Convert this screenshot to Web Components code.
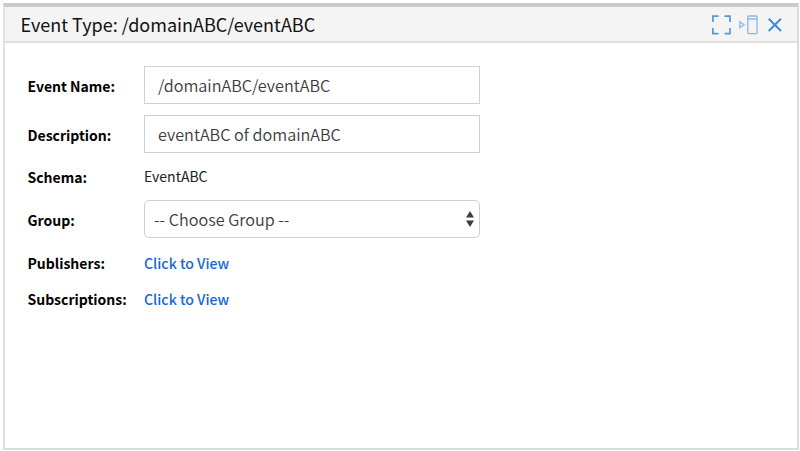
<!DOCTYPE html>
<html lang="en">
<head>
<meta charset="utf-8">
<title>Event Type</title>
<style>
html, body { margin: 0; height: 100%; background: #fff; }
body { box-sizing: border-box; height: 451px; padding: 3px 1px 1px 3px; overflow: hidden; font-family: "Noto Sans CJK SC", "Noto Sans", sans-serif; color: #111; }
</style>
</head>
<body>
<event-panel heading="Event Type: /domainABC/eventABC">
  <form-row label="Event Name:" style="--h:38px;--gap:11px"><text-field>/domainABC/eventABC</text-field></form-row>
  <form-row label="Description:" style="--h:38px;--gap:12px"><text-field>eventABC of domainABC</text-field></form-row>
  <form-row label="Schema:" style="--h:22px;--gap:13px"><plain-value>EventABC</plain-value></form-row>
  <form-row label="Group:" style="--h:38px;--gap:13px"><select-field>-- Choose Group --</select-field></form-row>
  <form-row label="Publishers:" style="--h:22px;--gap:14px"><link-value>Click to View</link-value></form-row>
  <form-row label="Subscriptions:" style="--h:22px;--gap:0px"><link-value>Click to View</link-value></form-row>
</event-panel>
<script>
function define(name, html) {
  const template = document.createElement('template');
  template.innerHTML = html;
  customElements.define(name, class extends HTMLElement {
    constructor() {
      super();
      this.attachShadow({ mode: 'open' }).append(template.content.cloneNode(true));
    }
    connectedCallback() {
      this.shadowRoot.querySelectorAll('[data-text]').forEach(el => {
        el.textContent = this.getAttribute(el.dataset.text);
      });
    }
  });
}

define('panel-tools', `
<style>
:host { display: flex; align-items: center; gap: 8px; padding-top: 1.5px; }
svg { display: block; fill: none; }
svg:last-child { margin-left: 2px; }
</style>
<svg width="19" height="20" viewBox="0 0 19 20" stroke="#5a93e0" stroke-width="1.7"><path d="M.9 7V1.2H6.5M12.5 1.2H18V7M18 13V18.6H12.5M6.5 18.6H.9V13"/></svg>
<svg width="19" height="20" viewBox="0 0 19 20" stroke="#8db4e6" stroke-width="1.3"><path d="M.8 6.8L5 9.8L.8 12.8Z"/><rect x="8.8" y="1" width="9.2" height="17.6" rx="1"/><path d="M9 4H18" stroke-width="1.4"/></svg>
<svg width="14" height="14" viewBox="0 0 14 14" stroke="#4388e6" stroke-width="2"><path d="M.7 .7L13 13M13 .7L.7 13"/></svg>
`);

define('event-panel', `
<style>
:host { display: flex; flex-direction: column; box-sizing: border-box; height: 447px; border: 2px solid #dcdcdc; border-top: 4px solid #cacaca; border-left-color: #e0e0e0; background: #fff; }
header { display: flex; align-items: center; justify-content: space-between; box-sizing: border-box; height: 36px; padding: 0 15px 0 15.5px; background: #f4f4f4; border-bottom: 2px solid #dedede; }
h1 { margin: 0; font-size: 18.03px; font-weight: 400; line-height: 34px; white-space: nowrap; }
main { display: flex; flex-direction: column; padding: 23px 0 0 22.5px; }
</style>
<header><h1 data-text="heading"></h1><panel-tools></panel-tools></header>
<main><slot></slot></main>
`);

define('form-row', `
<style>
:host { display: grid; grid-template-columns: 116.5px 336px; align-items: center; height: var(--h); margin-bottom: var(--gap); }
label { font-size: 14px; font-weight: 700; line-height: 22px; color: #000; white-space: nowrap; padding-top: 1px; }
</style>
<label data-text="label"></label><slot></slot>
`);

define('text-field', `
<style>
:host { display: block; box-sizing: border-box; height: 38px; padding: 0 13px; border: 1px solid #cfd0d1; background: #fff; color: #3c3c3c; font-size: 16.2px; font-weight: 350; line-height: 36px; white-space: nowrap; }
</style><slot></slot>
`);

define('select-field', `
<style>
:host { display: flex; align-items: center; justify-content: space-between; box-sizing: border-box; height: 38px; padding: 0 5px 0 9px; border: 1px solid #cfd0d1; border-radius: 5px; background: #fff; color: #3c3c3c; font-size: 16.2px; font-weight: 350; line-height: 36px; white-space: nowrap; }
svg { display: block; fill: #3e3e3e; }
</style><span><slot></slot></span>
<svg width="8" height="16" viewBox="0 0 8 16"><path d="M4 0L8 6.5H0ZM0 9.5H8L4 16Z"/></svg>
`);

define('plain-value', `
<style>
:host { display: block; font-size: 14px; line-height: 22px; color: #222; white-space: nowrap; margin-top: -1px; }
</style><slot></slot>
`);

define('link-value', `
<style>
:host { display: block; line-height: 22px; }
a { font-size: 14.1px; font-weight: 500; color: #1467d8; white-space: nowrap; text-decoration: none; }
</style><a><slot></slot></a>
`);
</script>
</body>
</html>
